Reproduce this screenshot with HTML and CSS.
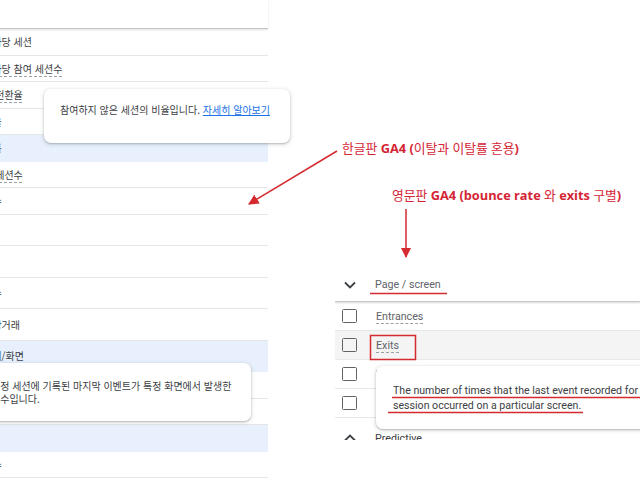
FILE: index.html
```html
<!DOCTYPE html>
<html lang="ko">
<head>
    <meta charset="UTF-8">
    <meta name="viewport" content="width=device-width, initial-scale=1.0">
    <title>GA4 이탈 / Exits 비교</title>
    <link rel="stylesheet" href="styles.css">
</head>
<body>
    <div class="page">
        <!-- 한글판 측정항목 목록 (잘린 캡처) -->
        <section class="ko-panel">
            <div class="ko-head"></div>
            <div class="ko-row"><span class="ko-label">사용자당 세션</span></div>
            <div class="ko-row"><span class="ko-label dashed">사용자당 참여 세션수</span></div>
            <div class="ko-row"><span class="ko-label dashed">세션 전환율</span></div>
            <div class="ko-row"><span class="ko-label">참여율</span></div>
            <div class="ko-row hover"><span class="ko-label">이탈률</span></div>
            <div class="ko-row"><span class="ko-label dashed">참여 세션수</span></div>
            <div class="ko-row"><span class="ko-label">세션수</span></div>
            <div class="ko-row tall"><span class="ko-label">수익</span></div>
            <div class="ko-row tall"><span class="ko-label">조회</span></div>
            <div class="ko-row tall"><span class="ko-label">거래수</span></div>
            <div class="ko-row tall"><span class="ko-label">전자상거래</span></div>
            <div class="ko-row tall hover"><span class="ko-label">페이지/화면</span></div>
            <div class="ko-row"><span class="ko-label">방문 페이지</span></div>
            <div class="ko-row"><span class="ko-label">종료 페이지</span></div>
            <div class="ko-row hover"><span class="ko-label">이탈</span></div>
            <div class="ko-row"><span class="ko-label">조회수</span></div>

            <div class="tooltip ko-tip-rate">
                참여하지 않은 세션의 비율입니다. <a class="tip-link" href="#">자세히 알아보기</a>
            </div>
            <div class="tooltip ko-tip-exit">
                특정 세션에 기록된 마지막 이벤트가 특정 화면에서 발생한<br>횟수입니다.
            </div>
        </section>

        <!-- 영문판 측정항목 목록 -->
        <section class="en-panel">
            <div class="en-head">
                <svg class="chevron" viewBox="0 0 12 8"><polyline points="1,1.5 6,6.5 11,1.5"/></svg>
                <span>Page / screen</span>
            </div>
            <div class="en-row"><span class="check"></span><span class="en-label dashed">Entrances</span></div>
            <div class="en-row hover"><span class="check"></span><span class="en-label dashed">Exits</span></div>
            <div class="en-row"><span class="check"></span><span class="en-label">Views</span></div>
            <div class="en-row"><span class="check"></span><span class="en-label">Views per user</span></div>
            <div class="en-group">
                <svg class="chevron" viewBox="0 0 12 8"><polyline points="1,6.5 6,1.5 11,6.5"/></svg>
                <span>Predictive</span>
            </div>

            <div class="tooltip en-tip">
                The number of times that the last event recorded for a<br>session occurred on a particular screen.
            </div>
        </section>

        <!-- 주석 -->
        <p class="note note-ko">한글판 <b>GA4 (</b>이탈과 이탈률 혼용<b>)</b></p>
        <p class="note note-en">영문판 <b>GA4 (bounce rate</b> 와 <b>exits</b> 구별<b>)</b></p>

        <svg class="marks" viewBox="0 0 640 480">
            <defs>
                <marker id="head" viewBox="0 0 10 10" refX="9" refY="5" markerWidth="7" markerHeight="7" orient="auto-start-reverse">
                    <path d="M0,0 L10,5 L0,10 z"/>
                </marker>
            </defs>
            <line x1="337" y1="151" x2="249" y2="204" marker-end="url(#head)"/>
            <line x1="406" y1="209" x2="406" y2="257" marker-end="url(#head)"/>
            <line x1="370" y1="293.5" x2="447" y2="293.5"/>
            <rect x="370.5" y="335.5" width="45" height="24"/>
            <line x1="392" y1="397.5" x2="640" y2="397.5"/>
            <line x1="388" y1="412.5" x2="583" y2="412.5"/>
        </svg>
    </div>
</body>
</html>
```

FILE: styles.css
```css
body {
    margin: 0;
    background-color: #fff;
}

.page {
    position: relative;
    width: 640px;
    height: 480px;
    overflow: hidden;
    display: flex;
    align-items: flex-start;
    background-color: #fff;
}

/* Korean metric list */
.ko-panel {
    position: relative;
    flex: none;
    width: 308px;
    margin-left: -40px;
    font-family: "Noto Sans CJK KR", sans-serif;
    font-size: 10px;
    color: #3c4043;
}

.ko-head {
    height: 29px;
    box-sizing: border-box;
    border-bottom: 1px solid #c6c6c6;
    box-shadow: 0 1px 2px rgba(0,0,0,0.12);
}

.ko-row {
    display: flex;
    align-items: center;
    height: 26.5px;
    box-sizing: border-box;
    padding-left: 14px;
    border-bottom: 1px solid #e6e6e6;
    white-space: nowrap;
}

.ko-row.tall {
    height: 31.5px;
}

.ko-row.hover {
    background-color: #e8f0fe;
    border-bottom-color: #e8f0fe;
}

.dashed {
    text-decoration: underline dashed #9aa0a6 1px;
    text-underline-offset: 3px;
}

/* Tooltips */
.tooltip {
    position: absolute;
    z-index: 2;
    background-color: #fff;
    border-radius: 7px;
    box-shadow: 0 1px 2px rgba(60,64,67,0.3), 0 1px 4px 1px rgba(60,64,67,0.12);
    white-space: nowrap;
}

.ko-tip-rate {
    left: 84px;
    top: 89px;
    width: 214px;
    padding: 14px 16px 26px;
    line-height: 14px;
}

.ko-tip-exit {
    left: 15px;
    top: 363px;
    width: 242px;
    padding: 16px 18px 16px 16px;
    line-height: 13px;
}

.tip-link {
    color: #1a73e8;
    text-decoration: underline;
}

/* English metric list */
.en-panel {
    position: relative;
    flex: none;
    width: 305px;
    height: 172px;
    margin: 268px 0 0 67px;
    overflow: hidden;
    font-family: Roboto, sans-serif;
    font-size: 10.7px;
    color: #5f6368;
}

.en-head {
    display: flex;
    align-items: center;
    gap: 19px;
    height: 34px;
    box-sizing: border-box;
    padding-left: 9px;
    border-bottom: 1px solid #c6c6c6;
    box-shadow: 0 1px 2px rgba(0,0,0,0.15);
}

.chevron {
    width: 12px;
    height: 8px;
    fill: none;
    stroke: #3c4043;
    stroke-width: 1.8;
}

.en-row {
    display: flex;
    align-items: center;
    gap: 19px;
    height: 29px;
    box-sizing: border-box;
    padding-left: 7px;
    border-bottom: 1px solid #e8e8e8;
}

.en-row.hover {
    background-color: #f4f4f4;
}

.check {
    width: 15px;
    height: 14px;
    box-sizing: border-box;
    border: 1.6px solid #5f6368;
    border-radius: 1.5px;
}

.en-group {
    display: flex;
    align-items: center;
    gap: 19px;
    height: 40px;
    padding-left: 9px;
    color: #3c4043;
}

.en-tip {
    left: 41px;
    top: 98px;
    width: 300px;
    padding: 17px 17px 16px;
    font-size: 10.6px;
    line-height: 15px;
    color: #3c4043;
}

/* Red annotations */
.note {
    position: absolute;
    z-index: 3;
    margin: 0;
    font-family: "Open Sans", "Noto Sans CJK KR", sans-serif;
    font-size: 12.8px;
    line-height: 16px;
    color: #d42535;
    white-space: nowrap;
}

.note b {
    font-weight: 700;
}

.note-ko {
    left: 342px;
    top: 140px;
}

.note-en {
    left: 392px;
    top: 187px;
}

.marks {
    position: absolute;
    z-index: 4;
    left: 0;
    top: 0;
    width: 640px;
    height: 480px;
    pointer-events: none;
    fill: none;
    stroke: #d42a30;
    stroke-width: 1.5;
}

.marks marker path {
    fill: #d42a30;
    stroke: none;
}
```
